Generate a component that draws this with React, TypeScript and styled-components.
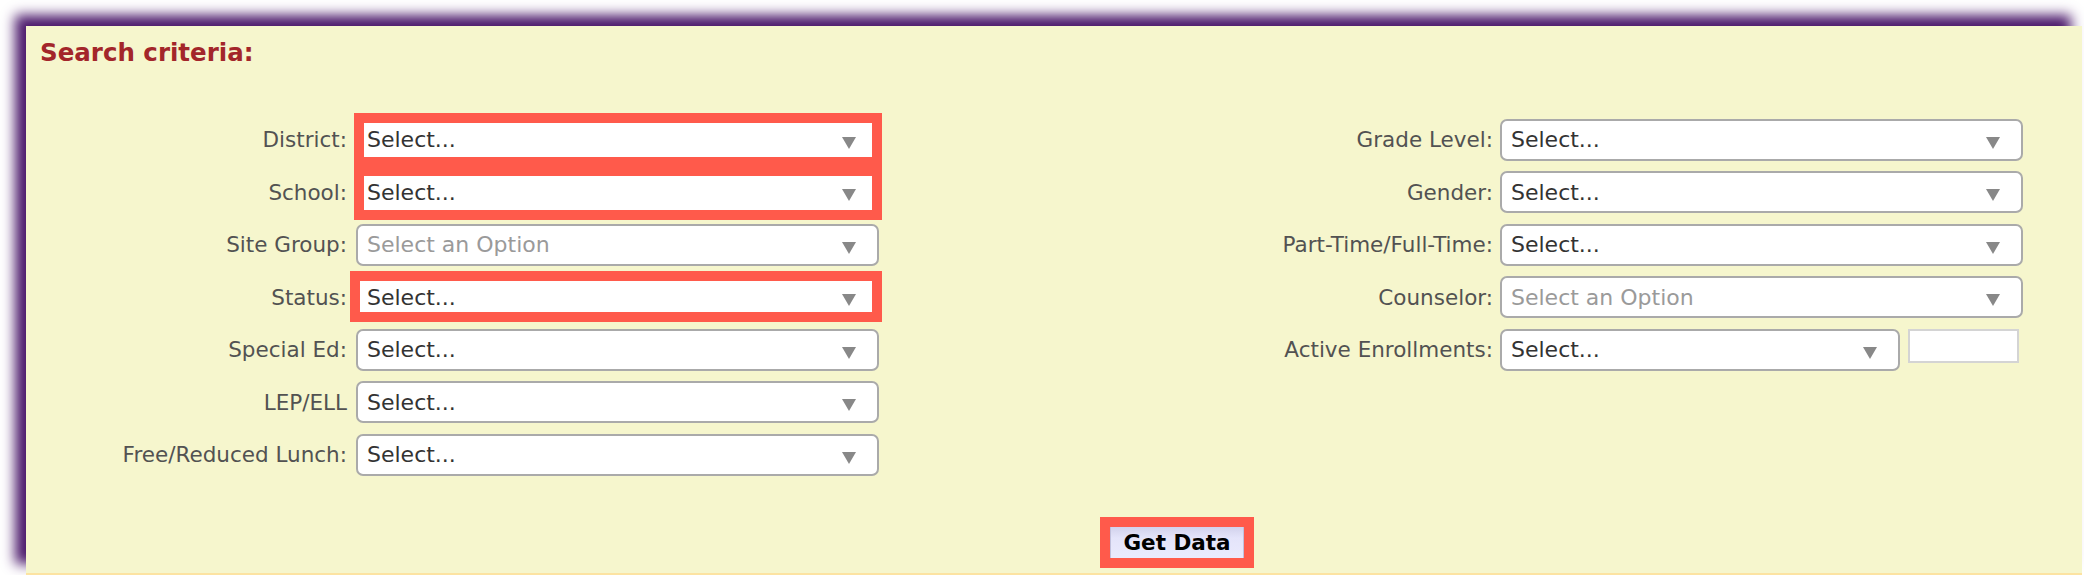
import styled, { createGlobalStyle } from 'styled-components';

const GlobalStyle = createGlobalStyle`
  html, body {
    margin: 0;
    padding: 0;
    background: #ffffff;
  }
  body {
    font-family: "DejaVu Sans", Verdana, sans-serif;
  }
`;

type Field = {
  label: string;
  placeholder?: boolean;
  highlight?: string; // inset of the red markup box
  extraInput?: boolean;
};

const leftFields: Field[] = [
  { label: 'District:', highlight: '-6px -3px -6px -2px' },
  { label: 'School:', highlight: '-5px -3px -7px -2px' },
  { label: 'Site Group:', placeholder: true },
  { label: 'Status:', highlight: '-5px -3px -4px -6px' },
  { label: 'Special Ed:' },
  { label: 'LEP/ELL' },
  { label: 'Free/Reduced Lunch:' },
];

const rightFields: Field[] = [
  { label: 'Grade Level:' },
  { label: 'Gender:' },
  { label: 'Part-Time/Full-Time:' },
  { label: 'Counselor:', placeholder: true },
  { label: 'Active Enrollments:', extraInput: true },
];

function FieldColumn({ fields, labelWidth, gap }: { fields: Field[]; labelWidth: number; gap: number }) {
  return (
    <Column $labelWidth={labelWidth} $gap={gap}>
      {fields.map((f) => {
        const text = f.placeholder ? 'Select an Option' : 'Select...';
        let control = (
          <SelectBox $placeholder={f.placeholder} $width={f.extraInput ? 400 : 523}>
            {text}
          </SelectBox>
        );
        if (f.highlight) {
          control = <Highlight $inset={f.highlight}>{control}</Highlight>;
        }
        return (
          <Row key={f.label}>
            <Label>{f.label}</Label>
            {f.extraInput ? (
              <Combo>
                {control}
                <SmallInput />
              </Combo>
            ) : (
              control
            )}
          </Row>
        );
      })}
    </Column>
  );
}

function App() {
  return (
    <>
      <GlobalStyle />
      <Panel>
        <Title>Search criteria:</Title>
        <Form>
          <FieldColumn fields={leftFields} labelWidth={247} gap={9} />
          <FieldColumn fields={rightFields} labelWidth={293} gap={7} />
        </Form>
        <ButtonRow>
          <Highlight $inset="-9px -10px">
            <GetData type="button">Get Data</GetData>
          </Highlight>
        </ButtonRow>
      </Panel>
    </>
  );
}

const Panel = styled.section`
  box-sizing: border-box;
  margin: 26px 2px 0 26px;
  height: 549px;
  padding: 13px 0 0 14px;
  background: #f6f6cd;
  border-bottom: 2px solid #fce3a2;
  box-shadow: -11px -11px 12px #4c1a6c;
`;

const Title = styled.h2`
  margin: 0;
  font-size: 24.5px;
  line-height: 28.8px;
  font-weight: bold;
  color: #a3262a;
`;

const Form = styled.div`
  display: flex;
  gap: 321px;
  margin-top: 51px;
  padding-left: 60px;
`;

const Column = styled.div<{ $labelWidth: number; $gap: number }>`
  display: grid;
  grid-template-columns: ${({ $labelWidth }) => $labelWidth}px auto;
  grid-auto-rows: 42px;
  column-gap: ${({ $gap }) => $gap}px;
  row-gap: 10.5px;
  align-content: start;
`;

const Row = styled.div`
  display: contents;
`;

const Label = styled.span`
  justify-self: end;
  align-self: center;
  white-space: nowrap;
  font-size: 21.5px;
  color: #525252;
`;

const Combo = styled.div`
  display: flex;
  align-items: flex-start;
  gap: 8px;
`;

const SelectBox = styled.div<{ $placeholder?: boolean; $width: number }>`
  position: relative;
  box-sizing: border-box;
  width: ${({ $width }) => $width}px;
  height: 42px;
  display: flex;
  align-items: center;
  padding: 0 40px 0 9px;
  background: #ffffff;
  border: 2px solid #aaaaaa;
  border-radius: 7px;
  font-size: 22px;
  color: ${({ $placeholder }) => ($placeholder ? '#9a9a9a' : '#333333')};
  white-space: nowrap;

  &::after {
    content: '';
    position: absolute;
    right: 21px;
    top: 16px;
    border-left: 7px solid transparent;
    border-right: 7px solid transparent;
    border-top: 12px solid #888888;
  }
`;

const SmallInput = styled.div`
  box-sizing: border-box;
  width: 111px;
  height: 34px;
  background: #ffffff;
  border: 2px solid #d4d4d4;
`;

const Highlight = styled.div<{ $inset: string }>`
  position: relative;
  width: fit-content;

  &::after {
    content: '';
    position: absolute;
    inset: ${({ $inset }) => $inset};
    border: 10px solid #ff5a4b;
    pointer-events: none;
  }
`;

const ButtonRow = styled.div`
  display: flex;
  margin-top: 50px;
  padding-left: 1070px;
`;

const GetData = styled.button`
  box-sizing: border-box;
  width: 134px;
  height: 33px;
  padding: 0;
  border: 1px solid #c0c0dc;
  background: linear-gradient(#d2d2ec, #e4e4fa 35%, #eaeafd);
  font-family: "DejaVu Sans", Verdana, sans-serif;
  font-size: 21.5px;
  font-weight: bold;
  color: #000000;
`;

export default App;
